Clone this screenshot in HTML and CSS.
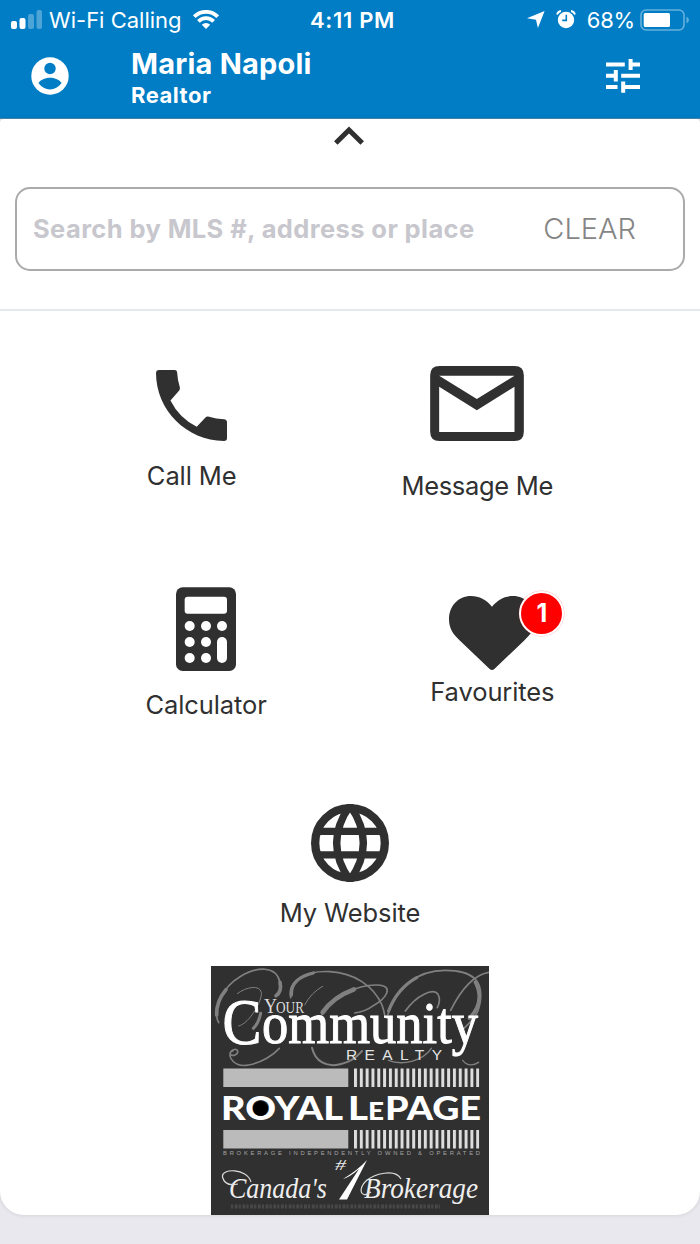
FILE: index.html
```html
<!DOCTYPE html>
<html lang="en">
  <head>
    <meta charset="utf-8">
    <title>Maria Napoli - Realtor</title>
    <link rel="stylesheet" href="styles.css">
  </head>
  <body>
    <header class="header">
      <div class="status-bar">
        <div class="status-left">
          <svg width="31" height="19" viewBox="0 0 31 19" fill="#fff">
            <rect x="0" y="11" width="6" height="8" rx="2"/>
            <rect x="8.5" y="8" width="6" height="11" rx="2"/>
            <rect x="17" y="4" width="6" height="15" rx="2" opacity=".3"/>
            <rect x="25.5" y="0" width="5.5" height="19" rx="2" opacity=".3"/>
          </svg>
          <span class="carrier">Wi-Fi Calling</span>
          <svg class="wifi" width="26" height="19" viewBox="0 0 26 19" fill="none" stroke="#fff" stroke-width="3.8">
            <path d="M1.3 6.7A16.5 16.5 0 0 1 24.7 6.7"/>
            <path d="M5.4 11.4A10.6 10.6 0 0 1 20.6 11.4"/>
            <path d="M13 19l-4.200-4.200a6 6 0 0 1 8.400 0z" fill="#fff" stroke="none"/>
          </svg>
        </div>
        <span class="time">4:11 PM</span>
        <div class="status-right">
          <svg width="18" height="17" viewBox="0 0 18 17" fill="#fff"><path d="M17.600 0L10.900 17 9 8.800 0 7.200z"/></svg>
          <svg class="alarm" width="20" height="19" viewBox="0 0 20 19">
            <circle cx="10" cy="10" r="8.2" fill="#fff"/>
            <path d="M1 4.5Q2 1.5 5 1M19 4.5Q18 1.5 15 1" fill="none" stroke="#fff" stroke-width="1.8"/>
            <path d="M10.3 4.8v5.6H6.2" fill="none" stroke="#007dc5" stroke-width="1.6"/>
          </svg>
          <span class="percent">68%</span>
          <svg width="50" height="22" viewBox="0 0 50 22">
            <rect x="1" y="1" width="43" height="20" rx="5" fill="none" stroke="#fff" stroke-width="1.6" opacity=".4"/>
            <rect x="3.7" y="4" width="26.3" height="14" rx="1.5" fill="#fff"/>
            <path d="M46.5 7.500q5 3.500 0 7z" fill="#fff" opacity=".4"/>
          </svg>
        </div>
      </div>
      <div class="profile">
        <svg class="avatar" width="38" height="38" viewBox="0 0 38 38">
          <circle cx="19" cy="19" r="18.7" fill="#fff"/>
          <circle cx="19" cy="11.5" r="5.7" fill="#007dc5"/>
          <path d="M7.4 26C10 22.2 15 20.7 19 20.7S28 22.2 30.6 26C27.5 30.4 23.5 32.4 19 32.4S10.5 30.4 7.4 26z" fill="#007dc5"/>
        </svg>
        <div class="agent">
          <div class="agent-name">Maria Napoli</div>
          <div class="agent-role">Realtor</div>
        </div>
        <svg width="34" height="34" viewBox="0 0 34 34" fill="#fff">
          <path d="M0 3.4h18.8v4H0zM22.6 0h4v3.4H34v4h-7.4V11h-4zM7.8 11h4v11.4h-4v-3.7H0v-4h7.8zM15.2 14.7H34v4H15.2zM0 26h11.5v4H0zM15.2 22.4h4V26H34v4H19.2v3.7h-4z"/>
        </svg>
      </div>
    </header>

    <main class="panel">
      <div class="collapse">
        <svg width="30" height="19" viewBox="0 0 30 19"><path d="M1.8 17L15 4l13.2 13" fill="none" stroke="#303030" stroke-width="5"/></svg>
      </div>
      <div class="search">
        <span class="search-hint">Search by MLS #, address or place</span>
        <span class="search-clear">CLEAR</span>
      </div>

      <nav class="menu">
        <div class="menu-row row-contact">
          <a class="item call">
            <svg width="71" height="71" viewBox="79 60 211 211" fill="#303030">
              <path d="M87 60H134Q142 60 142 69Q143 91 150 112Q151 117 148 121L122 151Q148 203 200 229L226 201Q230 197 237 199Q257 206 281 206Q290 207 290 215V263Q290 271 281 271C170 269 79 180 79 68Q79 61 87 60z"/>
            </svg>
            <span class="label">Call Me</span>
          </a>
          <a class="item message">
            <svg width="94" height="75" viewBox="126 48 281 225">
              <path fill="#303030" fill-rule="evenodd" d="M154 48H379Q407 48 407 76V245Q407 273 379 273H154Q126 273 126 245V76Q126 48 154 48zM153 77L266 147L379 77zM153 110V246H379V110L266 181z"/>
            </svg>
            <span class="label">Message Me</span>
          </a>
        </div>
        <div class="menu-row row-tools">
          <a class="item calculator">
            <svg width="60" height="84" viewBox="139 48 180 252">
              <rect x="139" y="49" width="180" height="251" rx="20" fill="#303030"/>
              <g fill="#fff">
                <rect x="165" y="77" width="127" height="51" rx="9"/>
                <circle cx="180" cy="165" r="15"/><circle cx="229" cy="165" r="15"/><circle cx="277" cy="165" r="15"/>
                <circle cx="180" cy="213" r="15"/><circle cx="229" cy="213" r="15"/>
                <circle cx="180" cy="261" r="15"/><circle cx="229" cy="261" r="15"/>
                <rect x="262" y="198" width="30" height="78" rx="15"/>
              </g>
            </svg>
            <span class="label">Calculator</span>
          </a>
          <a class="item favourites">
            <svg width="86" height="74" viewBox="89 78 258 222" fill="#303030">
              <path d="M218 110C201 89 180 78 155 78C117 78 89 108 89 148C89 176 102 194 122 212L211 297Q218 303 225 297L314 212C334 194 347 176 347 148C347 108 319 78 281 78C256 78 235 89 218 110z"/>
            </svg>
            <span class="badge">1</span>
            <span class="label">Favourites</span>
          </a>
        </div>
        <div class="menu-row">
          <a class="item website">
            <svg width="78" height="78" viewBox="153 40 234 234" fill="none" stroke="#303030">
              <circle cx="270" cy="157" r="104.5" stroke-width="25"/>
              <path d="M270 45Q190 157 270 269Q350 157 270 45zM168 122H372M168 192.500H372" stroke-width="22"/>
            </svg>
            <span class="label">My Website</span>
          </a>
        </div>
      </nav>

      <svg class="brokerage" width="278" height="249" viewBox="211 966 278 249">
        <defs>
          <pattern id="stripes" x="354" y="0" width="5.82" height="20" patternUnits="userSpaceOnUse">
            <rect width="3" height="20" fill="#ddd"/>
          </pattern>
        </defs>
        <rect x="211" y="966" width="278" height="249" fill="#303030"/>
        <!-- script monogram behind the name -->
        <g transform="translate(200 955) scale(.3333)" fill="none" stroke="#808080" stroke-width="5" stroke-linecap="round">
          <path d="M56 203C34 160 70 95 120 65S228 30 240 82"/>
          <path d="M240 82Q246 110 228 122" stroke-width="11"/>
          <path d="M50 180Q48 140 78 104" stroke-width="11"/>
          <path d="M112 116C140 94 180 90 184 112S150 205 116 213" stroke-width="3"/>
          <path d="M182 175Q176 205 160 220" stroke-width="9"/>
          <path d="M100 287C84 290 90 306 105 300C124 290 106 276 94 288C80 308 106 338 146 330S220 300 238 280"/>
          <path d="M272 128C262 75 320 46 390 50S520 90 546 150Q552 166 554 180"/>
          <path d="M274 120Q272 70 340 54" stroke-width="10"/>
          <path d="M314 150Q334 112 368 94" stroke-width="3"/>
          <path d="M366 178C400 120 480 88 532 90S560 130 520 152Q496 170 464 174"/>
          <path d="M368 172Q400 126 462 103" stroke-width="14"/>
          <path d="M336 278C346 320 380 338 420 328S470 305 486 288" stroke-width="6"/>
          <path d="M564 178C584 100 650 46 736 46S846 80 842 130S816 196 790 222" stroke-width="5"/>
          <path d="M566 168Q592 100 650 68M826 82Q856 140 808 190" stroke-width="10"/>
          <path d="M616 168C650 120 700 98 714 118Q724 134 712 158" stroke-width="5"/>
          <path d="M752 166C780 110 820 60 866 52" stroke-width="5"/>
          <path d="M565 316C610 334 670 316 694 280M788 316Q808 340 836 322" stroke-width="4"/>
        </g>
        <g class="serif" fill="#fff" stroke="#fff" stroke-width="1">
          <text x="222.500" y="1044" font-size="66" textLength="39" lengthAdjust="spacingAndGlyphs">C</text>
          <text x="262" y="1043" font-size="60" textLength="216" lengthAdjust="spacingAndGlyphs">ommunity</text>
        </g>
        <g class="serif" fill="#ddd" stroke="#303030" stroke-width="2" paint-order="stroke">
          <text x="264" y="1013" font-size="21" textLength="13" lengthAdjust="spacingAndGlyphs">Y</text>
          <text x="276" y="1013" font-size="16" textLength="28" lengthAdjust="spacingAndGlyphs">OUR</text>
        </g>
        <text class="sans" x="346" y="1060" font-size="15.500" textLength="96" fill="#e4e4e4">REALTY</text>
        <rect x="223.300" y="1068.500" width="125" height="18.500" fill="#bbb"/>
        <rect x="354" y="1068.500" width="125.300" height="18.500" fill="url(#stripes)"/>
        <g class="heavy" fill="#fff">
          <text x="221" y="1120" font-size="32.500" textLength="122" lengthAdjust="spacingAndGlyphs">ROYAL</text>
          <text x="348" y="1120" font-size="32.500" textLength="20" lengthAdjust="spacingAndGlyphs">L</text>
          <text x="368" y="1120" font-size="25" textLength="16" lengthAdjust="spacingAndGlyphs">E</text>
          <text x="385" y="1120" font-size="32.500" textLength="96" lengthAdjust="spacingAndGlyphs">PAGE</text>
        </g>
        <circle cx="260.500" cy="1108.500" r="7.500" fill="#000"/>
        <rect x="223.300" y="1130" width="125" height="18.500" fill="#bbb"/>
        <rect x="354" y="1130" width="125.300" height="18.500" fill="url(#stripes)"/>
        <text class="sans" x="223" y="1155" font-size="5.800" textLength="257" fill="#a5a5a5">BROKERAGE INDEPENDENTLY OWNED &amp; OPERATED</text>
        <g class="script" fill="#eee">
          <text x="229" y="1197.500" font-size="29" textLength="98" lengthAdjust="spacingAndGlyphs">Canada's</text>
          <text x="335" y="1170" font-size="15" textLength="11" lengthAdjust="spacingAndGlyphs">#</text>
          <text x="364" y="1197.500" font-size="29" textLength="114" lengthAdjust="spacingAndGlyphs">Brokerage</text>
        </g>
        <path d="M339 1199.500L359 1169Q350 1177 343 1179Q358 1170 367 1160L347 1199.500z" fill="#fff"/>
        <path d="M251 1182C247 1168 221 1168 222.500 1177Q225 1187 238 1184M371 1192C360 1200 358 1188 366 1181S395 1168 401 1179" fill="none" stroke="#ddd" stroke-width="1.200"/>
        <path d="M231 1206.500H440" fill="none" stroke="#484848" stroke-width="4" stroke-dasharray="2.200 1.500 3 1"/>
      </svg>
    </main>
  </body>
</html>
```

FILE: styles.css
```css
body {
  margin: 0;
  height: 1244px;
  background-color: #e9e8ee;
  font-family: Inter, "Liberation Sans", sans-serif;
  color: #303030;
  overflow: hidden;
}

svg {
  display: block;
  flex-shrink: 0;
}

.header {
  box-sizing: border-box;
  height: 119px;
  background-color: #007dc5;
  border-bottom: 1px solid #4d86ad;
  color: #fff;
}

/* Status bar */
.status-bar {
  display: grid;
  grid-template-columns: 1fr auto 1fr;
  align-items: center;
  height: 39px;
  padding: 0 10px 0 11px;
  font-size: 22px;
  white-space: nowrap;
}

.status-left,
.status-right {
  display: flex;
  align-items: center;
}

.status-right {
  justify-content: flex-end;
}

.carrier {
  margin: 0 11px 0 7px;
}

.time {
  position: relative;
  left: 2px;
  font-weight: 600;
  letter-spacing: 0.7px;
}

.alarm {
  margin: 0 11px 0 11px;
}

.percent {
  margin-right: 5px;
  letter-spacing: -0.2px;
}

/* Agent details */
.profile {
  display: flex;
  align-items: center;
  height: 74px;
  padding: 0 60px 0 31px;
}

.agent {
  flex: 1;
  margin-left: 62px;
  padding-top: 3px;
  font-weight: 700;
}

.agent-name {
  font-size: 29px;
  line-height: 35px;
  letter-spacing: 0.2px;
}

.agent-role {
  font-size: 22px;
  line-height: 28px;
  letter-spacing: 0.5px;
}

.panel {
  box-sizing: border-box;
  height: 1096px;
  background-color: #fff;
  border-radius: 4px 4px 24px 24px;
  box-shadow: 0 0 4px rgba(0, 0, 0, 0.12);
  overflow: hidden;
}

.collapse {
  display: flex;
  justify-content: center;
  height: 68px;
  padding-top: 7px;
  padding-right: 2px;
  box-sizing: border-box;
}

.search {
  box-sizing: border-box;
  display: flex;
  align-items: center;
  justify-content: space-between;
  height: 84px;
  margin: 0 15px;
  padding: 0 47px 1px 16px;
  border: 2px solid #aaa;
  border-radius: 15px;
  white-space: nowrap;
}

.search-hint {
  color: #c7c7cd;
  font-size: 25.5px;
  font-weight: 700;
  letter-spacing: 0.4px;
}

.search-clear {
  color: #858585;
  font-size: 29px;
  font-weight: 300;
}

/* Menu */
.menu {
  margin-top: 38px;
  border-top: 2px solid #e6e9ec;
  height: 655px;
}

.menu-row {
  display: flex;
  justify-content: space-evenly;
}

.row-contact {
  height: 275.5px;
}

.row-tools {
  height: 217px;
}

.item {
  position: relative;
  display: flex;
  flex-direction: column;
  align-items: center;
  padding: 0 18px;
}

.label {
  font-size: 25.5px;
  line-height: 32px;
  letter-spacing: -0.1px;
  white-space: nowrap;
}

.call {
  padding-top: 59px;
}

.call .label {
  margin-top: 19px;
}

.message {
  padding-top: 55px;
}

.message .label {
  margin-top: 29px;
  letter-spacing: -0.3px;
}

.calculator .label {
  margin-top: 18px;
}

.favourites {
  padding-top: 9px;
}

.favourites .label {
  margin-top: 6px;
}

.badge {
  position: absolute;
  top: 4px;
  right: 8px;
  width: 41px;
  height: 41px;
  border: 2px solid #fff;
  border-radius: 50%;
  box-shadow: 0 0 0 0.5px rgba(255, 0, 0, 0.25);
  background-color: #f00;
  color: #fff;
  font-size: 25px;
  font-weight: 700;
  line-height: 40px;
  text-align: center;
}

.website .label {
  margin-top: 15px;
}

/* Brokerage logo */
.brokerage {
  margin: 0 auto;
}

.serif {
  font-family: "Liberation Serif", serif;
}

.sans {
  font-family: "Liberation Sans", sans-serif;
}

.heavy {
  font-family: Lato, sans-serif;
  font-weight: 900;
}

.script {
  font-family: "Liberation Serif", serif;
  font-style: italic;
}
```
